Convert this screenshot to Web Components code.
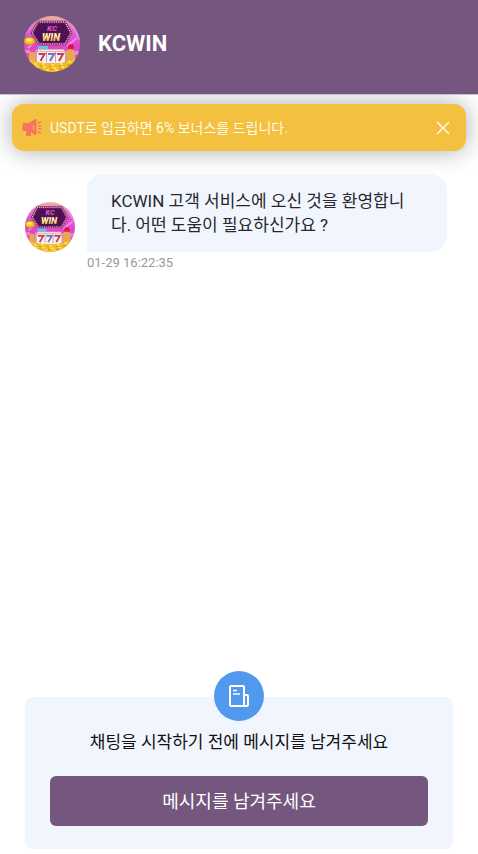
<!DOCTYPE html>
<html lang="ko">
<head>
<meta charset="utf-8">
<meta name="viewport" content="width=device-width, initial-scale=1">
<title>KCWIN</title>
<style>
  body {
    margin: 0;
    background: #fff;
    font-family: Roboto, "Noto Sans CJK KR", sans-serif;
  }
</style>
</head>
<body>
<chat-app></chat-app>

<script>
class BrandAvatar extends HTMLElement {
  constructor() {
    super();
    this.attachShadow({ mode: "open" });
  }

  static get styles() {
    return /* css */`
      :host {
        --size: 50px;

        display: block;
        flex: none;
        width: var(--size);
        height: var(--size);
        border-radius: 50%;
        overflow: hidden;
      }

      svg {
        display: block;
        width: 100%;
        height: 100%;
      }

      text {
        font-family: Roboto, sans-serif;
        font-weight: 900;
        font-style: italic;
        text-anchor: middle;
      }
    `;
  }

  connectedCallback() {
    this.render();
  }

  render() {
    this.shadowRoot.innerHTML = /* html */`
    <style>${BrandAvatar.styles}</style>
    <svg viewBox="0 0 56 56" role="img" aria-label="KCWIN">
      <defs>
        <linearGradient id="sky" x2="0" y2="1">
          <stop offset="0" stop-color="#eeb39d"/>
          <stop offset=".3" stop-color="#d95bd4"/>
          <stop offset=".65" stop-color="#e23fc4"/>
          <stop offset="1" stop-color="#e8a13c"/>
        </linearGradient>
        <linearGradient id="win" x2="0" y2="1">
          <stop offset=".3" stop-color="#fff6b0"/>
          <stop offset="1" stop-color="#f5a321"/>
        </linearGradient>
      </defs>
      <rect width="56" height="56" fill="url(#sky)"/>
      <path d="M0 20 12 0M44 0l12 24M4 32l8-8M43 30l10-8" stroke="#f08be8" stroke-width="2"/>
      <!-- sign -->
      <path d="M14 6h27l6 11-6 11H15L8 17z" fill="#4e1155" stroke="#7c286e" stroke-width="2.5" stroke-linejoin="round"/>
      <path d="M14 6h27l6 11-6 11H15L8 17z" fill="none" stroke="#f6c3c8" stroke-width="1.3" stroke-linecap="round" stroke-dasharray=".1 2.2"/>
      <text x="28" y="15" font-size="8" fill="#d657bd">KC</text>
      <text x="27" y="25" font-size="10" fill="url(#win)">WIN</text>
      <!-- coins -->
      <ellipse cx="5.5" cy="25" rx="5.5" ry="4" fill="#f6bd28" stroke="#c67817"/>
      <ellipse cx="5" cy="24" rx="3" ry="1.8" fill="#ffe36b"/>
      <circle cx="47" cy="31" r="3" fill="#d81554"/>
      <path d="M5 37q3-3 6 0v10H5zM42 35q5-4 9 0v13h-9z" fill="#e8a94a"/>
      <path d="M0 34h6v3H2zM50 35h5v4h-5z" fill="#ea8cc9"/>
      <path d="M14 30h10v4H14z" fill="#5cc7e5"/>
      <!-- reels -->
      <rect x="11" y="33" width="31" height="15" rx="3" fill="#d993bd"/>
      <path d="M14 34.5h26M13 46.5h27" stroke="#fff0cc" stroke-width="1.5"/>
      <rect x="13" y="36" width="28" height="10" rx="1" fill="#f8eff2"/>
      <path d="M22.5 36v10M31.5 36v10" stroke="#b6a2bd"/>
      <path d="M14.5 38h6l-4 7M33 38h6l-4 7" fill="none" stroke="#c43e57" stroke-width="2"/>
      <path d="M24 38h6l-4 7" fill="none" stroke="#6876bd" stroke-width="2"/>
      <path d="M0 46q7-4 13 0 15 3 29 0 7-4 14-1v11H0z" fill="#f2bd27"/>
      <path d="M4 46h3m3 2h3m5 0h3m6 1h3m6-1h3m5-2h3M10 51h4m5 0h3m6 1h4m5-1h3M22 54h3m6 0h3" stroke="#ffe878" stroke-width="1.4"/>
      <path d="M7 49h3m6 1h2m7 0h2m8 0h2m6-1h3M15 53h3m8 0h3m6 0h3" stroke="#c98716"/>
    </svg>`;
  }
}

customElements.define("brand-avatar", BrandAvatar);

class ChatHeader extends HTMLElement {
  constructor() {
    super();
    this.attachShadow({ mode: "open" });
  }

  static get styles() {
    return /* css */`
      :host {
        display: block;
        position: relative;
        z-index: 1;
        background: #75567e;
        box-shadow: 0 1px 0 #c9bcd6;
      }

      header {
        display: flex;
        align-items: center;
        gap: 18px;
        padding: 16px 24px 22px;
      }

      brand-avatar {
        --size: 56px;
      }

      h1 {
        margin: 0;
        color: #fff;
        font-size: 22px;
        line-height: 28px;
        font-weight: 700;
      }
    `;
  }

  connectedCallback() {
    this.render();
  }

  render() {
    this.shadowRoot.innerHTML = /* html */`
    <style>${ChatHeader.styles}</style>
    <header>
      <brand-avatar></brand-avatar>
      <h1><slot></slot></h1>
    </header>`;
  }
}

customElements.define("chat-header", ChatHeader);

class NoticeBar extends HTMLElement {
  constructor() {
    super();
    this.attachShadow({ mode: "open" });
  }

  static get styles() {
    return /* css */`
      :host {
        display: flex;
        align-items: center;
        gap: 8px;
        box-sizing: border-box;
        min-height: 47px;
        margin: 10px 12px 0;
        padding: 8px 12px 8px 10px;
        border-radius: 12px;
        background: #f4c040;
        box-shadow: 0 0 24px #0005;
        color: #fffbe8;
        font-size: 14px;
        line-height: 20px;
      }

      .horn {
        flex: none;
        width: 20px;
        height: 20px;
      }

      p {
        flex: 1;
        margin: 0;
      }

      button {
        display: grid;
        place-items: center;
        width: 22px;
        height: 24px;
        padding: 0;
        border: 0;
        background: none;
        color: inherit;
      }
    `;
  }

  connectedCallback() {
    this.render();
    this.shadowRoot.querySelector("button").addEventListener("click", () => this.remove());
  }

  render() {
    this.shadowRoot.innerHTML = /* html */`
    <style>${NoticeBar.styles}</style>
    <svg class="horn" viewBox="0 0 20 20" fill="#f5735f" aria-hidden="true">
      <path d="M2 5h5l6-4q1.5-.5 1.5 1v14q0 1.5-1.5 1l-4-3v3q0 1-1 1H5q-1 0-1-1v-4H2q-1.500 0-1.500-1.500V6.500Q.5 5 2 5z"/>
      <path d="M11.5 7v5" stroke="#f6b250" stroke-width="1.2"/>
      <path d="M16 5l3-1M16 8h3.5M16 11h3.5M16 14l3 1" stroke="#f5735f" stroke-width="1.5"/>
    </svg>
    <p><slot></slot></p>
    <button type="button" aria-label="닫기">
      <svg width="14" height="14" viewBox="0 0 14 14" fill="none" stroke="currentColor" stroke-width="1.5" aria-hidden="true">
        <path d="M1 1l12 12M13 1L1 13"/>
      </svg>
    </button>`;
  }
}

customElements.define("notice-bar", NoticeBar);

class ChatMessage extends HTMLElement {
  constructor() {
    super();
    this.attachShadow({ mode: "open" });
  }

  static get styles() {
    return /* css */`
      :host {
        display: grid;
        grid-template-columns: auto 1fr;
        column-gap: 12px;
        align-items: end;
        margin: 23px 31px 0 25px;
      }

      .bubble {
        padding: 15px 24px;
        border-radius: 16px 16px 16px 0;
        background: #f1f6fe;
        color: #26282c;
        font-size: 17px;
        line-height: 24px;
      }

      time {
        grid-column: 2;
        color: #999;
        font-size: 13px;
        line-height: 22px;
      }
    `;
  }

  connectedCallback() {
    this.render();
  }

  render() {
    this.shadowRoot.innerHTML = /* html */`
    <style>${ChatMessage.styles}</style>
    <brand-avatar></brand-avatar>
    <div class="bubble"><slot></slot></div>
    <time>${this.getAttribute("time")}</time>`;
  }
}

customElements.define("chat-message", ChatMessage);

class LeaveMessage extends HTMLElement {
  constructor() {
    super();
    this.attachShadow({ mode: "open" });
  }

  static get styles() {
    return /* css */`
      :host {
        display: flex;
        flex-direction: column;
        align-items: center;
        margin: auto 25px 5px;
        padding: 0 25px 23px;
        border-radius: 8px;
        background: #f1f6fe;
      }

      .badge {
        display: grid;
        place-items: center;
        width: 50px;
        height: 50px;
        margin-top: -26px;
        border-radius: 50%;
        background: #5099ee;
      }

      p {
        margin: 9px 0 21px;
        color: #111;
        font-size: 17px;
        line-height: 25px;
        text-align: center;
      }

      button {
        width: 100%;
        padding: 13px 12px 11px;
        border: 0;
        border-radius: 6px;
        background: #75567e;
        color: #fff;
        font: inherit;
        font-size: 18px;
        line-height: 26px;
      }
    `;
  }

  connectedCallback() {
    this.render();
  }

  render() {
    this.shadowRoot.innerHTML = /* html */`
    <style>${LeaveMessage.styles}</style>
    <div class="badge">
      <svg width="22" height="24" viewBox="0 0 22 24" fill="none" stroke="#fff" stroke-width="2" stroke-linejoin="round" aria-hidden="true">
        <rect x="2" y="2" width="14" height="20" rx="1"/>
        <path d="M16 11h3q1 0 1 1v9q0 1-1 1h-4"/>
        <path d="M5 6.5h4M5 10h7" stroke-width="1.5"/>
      </svg>
    </div>
    <p><slot></slot></p>
    <button type="button">${this.getAttribute("action")}</button>`;
  }
}

customElements.define("leave-message", LeaveMessage);

class ChatApp extends HTMLElement {
  constructor() {
    super();
    this.attachShadow({ mode: "open" });
  }

  static get styles() {
    return /* css */`
      :host {
        display: flex;
        flex-direction: column;
        min-height: 100vh;
      }

      main {
        flex: 1;
        display: flex;
        flex-direction: column;
      }
    `;
  }

  connectedCallback() {
    this.render();
  }

  render() {
    this.shadowRoot.innerHTML = /* html */`
    <style>${ChatApp.styles}</style>
    <chat-header>KCWIN</chat-header>
    <main>
      <notice-bar>USDT로 입금하면 6% 보너스를 드립니다.</notice-bar>
      <chat-message time="01-29 16:22:35">KCWIN 고객 서비스에 오신 것을 환영합니다. 어떤 도움이 필요하신가요 ?</chat-message>
      <leave-message action="메시지를 남겨주세요">채팅을 시작하기 전에 메시지를 남겨주세요</leave-message>
    </main>`;
  }
}

customElements.define("chat-app", ChatApp);
</script>
</body>
</html>
